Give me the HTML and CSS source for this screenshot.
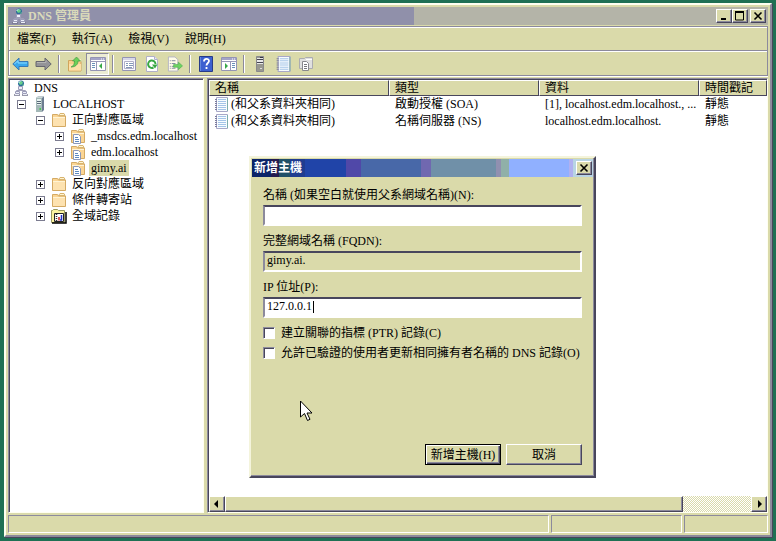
FILE: index.html
```html
<!DOCTYPE html>
<html lang="zh-Hant">
<head>
<meta charset="utf-8">
<title>DNS 管理員</title>
<link rel="stylesheet" href="styles.css">
</head>
<body>
<svg class="sprite" aria-hidden="true">
  <symbol id="i-dns" viewBox="0 0 16 16">
    <path d="M8 7v4M3.500 12v-1.500h9V12" fill="none" stroke="#a0a0b8"/>
    <circle cx="8" cy="3.500" r="3" fill="#2c6c9c"/><path d="M6 2l3-1 1 2-2 2-2-1zM9 5l2-1-1 2z" fill="#6ad08a"/><path d="M5.500 2.500l2-1" stroke="#d8f4f4"/>
    <path d="M5.500 6.500h4v3h-4zM2.500 11.500h4v2h-4zM9.500 11.500h4v2h-4z" fill="#eceef8" stroke="#9c9cb8"/>
    <path d="M1 15h6M9 15h6" stroke="#77778f" stroke-width="1.500"/><path d="M2 14.500h4M10 14.500h4" stroke="#eceef8"/>
  </symbol>
  <symbol id="i-server" viewBox="0 0 16 16">
    <path d="M4 2l2-1.500h6V14l-2 2H4z" fill="#6c7c90"/><path d="M4 2h6v14H4z" fill="#a4b8b8"/>
    <path d="M5 3h4v2H5zM5 6h4v1H5zM5 8h4v1H5z" fill="#e8f2f0"/><path d="M5 5.500h4M5 7.500h4" stroke="#586878"/><path d="M7.500 12h1.500v2H7.500z" fill="#48c850"/><path d="M4 2l2-1.500h6L10 2z" fill="#ccd8d8"/>
  </symbol>
  <symbol id="i-server-gray" viewBox="0 0 16 16">
    <path d="M4.500 .5h7v15h-7z" fill="#989890" stroke="#88888c"/><path d="M5 2h6v6H5z" fill="#e8e8e8"/><path d="M5 3.500h6M5 6.500h6" stroke="#444450"/><path d="M8 12h2v1H8z" fill="#ddd"/><path d="M8 1h3v1H8z" fill="#383840"/>
  </symbol>
  <symbol id="i-folder" viewBox="0 0 16 16">
    <path d="M1.500 14.500v-12h5l1 1.500h7v10.500z" fill="#fbd594" stroke="#d4aa64"/><path d="M7.500 3.500l1.500-2h4l1 2z" fill="#fff4d0" stroke="#d8b470"/><path d="M2 5.500h12V14H2z" fill="#fde2b0"/><path d="M2 5.500h12" stroke="#fff4d4"/>
  </symbol>
  <symbol id="i-zone" viewBox="0 0 16 16">
    <path d="M1.500 14.500v-12h5l1 1.500h7v10.500z" fill="#fbd594" stroke="#d4aa64"/><path d="M7.500 3.500l1.500-2h4l1 2z" fill="#fff4d0" stroke="#d8b470"/><path d="M2 5.500h12" stroke="#fff4d4"/>
    <path d="M3.500 6.500h5l2 2v7h-7z" fill="#fff" stroke="#8c98b8"/><path d="M5 9.500h3M5 11.500h4M5 13.500h4" stroke="#5c88c0"/>
  </symbol>
  <symbol id="i-log" viewBox="0 0 16 16">
    <path d="M.5 2.500h1l1-1h4l1 1h6v12H.5z" fill="#fbf3a0" stroke="#999960"/><path d="M1 15h14V4" fill="none" stroke="#000" stroke-width="1.500"/>
    <path d="M3.500 5.500h9v8h-9z" fill="#fff" stroke="#222"/><path d="M5.500 6v7" stroke="#333" stroke-width="1.500" stroke-dasharray="1 1"/><path d="M8 9v3.500" stroke="#d02020" stroke-width="1.500"/><path d="M10.500 7v5H9" fill="none" stroke="#2030c8" stroke-width="1.500"/>
  </symbol>
  <symbol id="i-record" viewBox="0 0 14 15">
    <path d="M2.500 .5h11v14h-11z" fill="#f8fcff" stroke="#a8a8c8"/><path d="M4 2.500h8M4 4.500h8M4 6.500h8M4 8.500h8M4 10.500h8M4 12.500h8" stroke="#a4c4e8"/>
    <path d="M13.500 1v13" stroke="#7cacac"/><path d="M1 2.500h2M1 4.500h2M1 6.500h2M1 8.500h2M1 10.500h2M1 12.500h2" stroke="#7c7c9c"/>
  </symbol>
  <symbol id="i-back" viewBox="0 0 17 14">
    <path d="M.8 7L7 1v3.500h9v5H7V13z" fill="#38a8ec" stroke="#3878b4"/><path d="M2.500 7L6 3.500V6h9" fill="none" stroke="#8cdcff"/>
  </symbol>
  <symbol id="i-fwd" viewBox="0 0 17 14">
    <path d="M16.200 7L10 1v3.500H1v5h9V13z" fill="#949498" stroke="#66666f"/><path d="M2 5.500h9V3.500" fill="none" stroke="#b4b4b4"/>
  </symbol>
  <symbol id="i-up" viewBox="0 0 16 16">
    <path d="M1.500 4.500h5l1 1h6.500v9.500H1.500z" fill="#fbd08c" stroke="#d0a45c"/><path d="M2 8h12v6.500H2z" fill="#fde0a8"/><path d="M9 3h5v2.500H9z" fill="#fff0c0"/><path d="M4 11c2.500-1 3.500-3 3.500-6H5.500L9.500 1l4 4H11c0 4-3 6-7 6z" fill="#6cd058" stroke="#389040" stroke-width=".6"/>
  </symbol>
  <symbol id="i-tree" viewBox="0 0 16 14">
    <path d="M.5 .5h15v13H.5z" fill="#fff" stroke="#9494b4"/><path d="M1 2h14" stroke="#a4a4c8" stroke-width="2"/><path d="M11 2h1M13 2h1" stroke="#fff"/><path d="M1 4.500h14M6.500 5v8" stroke="#9898b8"/><path d="M2 6.500h3M2 8.500h3M2 10.500h3" stroke="#6890b8"/><path d="M12 6v6L9 9z" fill="#38a848"/>
  </symbol>
  <symbol id="i-show" viewBox="0 0 16 14">
    <path d="M.5 .5h15v13H.5z" fill="#fff" stroke="#9494b4"/><path d="M1 2h14" stroke="#a4a4c8" stroke-width="2"/><path d="M11 2h1M13 2h1" stroke="#fff"/><path d="M1 4.500h14M9.500 5v8" stroke="#9898b8"/><path d="M11 6.500h3M11 8.500h3M11 10.500h3" stroke="#6890b8"/><path d="M4 6v6l3-3z" fill="#38a848"/>
  </symbol>
  <symbol id="i-props" viewBox="0 0 16 16">
    <path d="M1.500 1.500h13v13h-13z" fill="#f8f8ff" stroke="#9494b4"/><path d="M2 3h12" stroke="#b8b8d4"/><path d="M3.500 5.500h9v7h-9z" fill="#fff" stroke="#b0b0c8"/><path d="M5 7.500h2M8 7.500h4M5 9.500h2M8 9.500h4M5 11.500h6" stroke="#8498b8"/>
  </symbol>
  <symbol id="i-refresh" viewBox="0 0 16 16">
    <path d="M2.500 .5h8l3 3v12h-11z" fill="#fff" stroke="#b0b0c8"/><path d="M10.500 .5v3h3" fill="#e8e8ff" stroke="#b0b0c8"/><path d="M9.500 11.500A3.700 3.700 0 1 1 11.500 8" fill="none" stroke="#38a844" stroke-width="2"/><path d="M8 8.500h5.500L11 12.500z" fill="#38a844"/>
  </symbol>
  <symbol id="i-export" viewBox="0 0 17 16">
    <path d="M1.500 .5h7l3 3v12h-10z" fill="#fffce8" stroke="#b4b4c4"/><path d="M3 4.500h1M5 4.500h4M3 7.500h1M5 7.500h4M3 10.500h1M5 10.500h3M3 12.500h1M5 12.500h4" stroke="#7c889c"/><path d="M7 8.500h5V6l4.500 4-4.500 4v-2.500H7z" fill="#6cd460" stroke="#48a850" stroke-width=".6"/>
  </symbol>
  <symbol id="i-help" viewBox="0 0 14 16">
    <path d="M.5 .5h13v15H.5z" fill="#3c60d0" stroke="#283c88"/><path d="M1.500 1v14" stroke="#6488dc"/><path d="M5 5.500C5 2 10 2.200 10 5c0 2-2.500 2-2.500 4.500M7.500 11v2" fill="none" stroke="#fff" stroke-width="1.800"/>
  </symbol>
  <symbol id="i-docs" viewBox="0 0 16 16">
    <path d="M1.500 12.500v-10h5l1-1h7v11z" fill="#e0e0e0" stroke="#acacb0"/><path d="M8 3.500h6" stroke="#fff"/><path d="M4.500 5.500h4l2 2v7h-6z" fill="#fff" stroke="#88888c"/><path d="M6 8.500h3M6 10.500h3M6 12.500h3" stroke="#77777c"/>
  </symbol>
</svg>

<main class="window">
  <header class="titlebar">
    <svg class="icon"><use href="#i-dns"/></svg>
    <h1 class="title">DNS 管理員</h1>
    <div class="window-buttons">
      <button class="caption" aria-label="最小化"><svg viewBox="0 0 10 10"><path d="M2 8h5" stroke="#000" stroke-width="2"/></svg></button>
      <button class="caption" aria-label="最大化"><svg viewBox="0 0 10 10"><path d="M.5 1v8h8V1" fill="none" stroke="#000"/><path d="M0 1h9" stroke="#000" stroke-width="2"/></svg></button>
      <button class="caption caption-close" aria-label="關閉"><svg viewBox="0 0 10 10"><path d="M1.500 1.500l7 7M8.500 1.500l-7 7" stroke="#000" stroke-width="1.600"/></svg></button>
    </div>
  </header>

  <div class="bars">
    <nav class="menu">
      <button>檔案(F)</button><button>執行(A)</button><button>檢視(V)</button><button>說明(H)</button>
    </nav>
    <div class="toolbar">
      <button aria-label="上一頁"><svg class="wide"><use href="#i-back"/></svg></button>
      <button aria-label="下一頁"><svg class="wide"><use href="#i-fwd"/></svg></button>
      <span class="sep"></span>
      <button aria-label="上一層"><svg class="icon"><use href="#i-up"/></svg></button>
      <button class="pressed" aria-label="主控台樹狀目錄"><svg class="icon"><use href="#i-tree"/></svg></button>
      <span class="sep"></span>
      <button aria-label="內容"><svg class="icon"><use href="#i-props"/></svg></button>
      <button aria-label="重新整理"><svg class="icon"><use href="#i-refresh"/></svg></button>
      <button aria-label="匯出清單"><svg class="icon"><use href="#i-export"/></svg></button>
      <span class="sep"></span>
      <button aria-label="說明"><svg class="icon"><use href="#i-help"/></svg></button>
      <button aria-label="執行窗格"><svg class="icon"><use href="#i-show"/></svg></button>
      <span class="sep"></span>
      <button aria-label="伺服器"><svg class="icon"><use href="#i-server-gray"/></svg></button>
      <button aria-label="記錄"><svg class="icon"><use href="#i-record"/></svg></button>
      <button aria-label="區域"><svg class="icon"><use href="#i-docs"/></svg></button>
    </div>
  </div>

  <div class="panes">
    <section class="tree pane">
      <div class="node root"><svg class="icon"><use href="#i-dns"/></svg><span class="label">DNS</span></div>
      <ul>
        <li>
          <div class="node"><button class="toggle" aria-label="摺疊"></button><svg class="icon"><use href="#i-server"/></svg><span class="label">LOCALHOST</span></div>
          <ul>
            <li>
              <div class="node"><button class="toggle" aria-label="摺疊"></button><svg class="icon"><use href="#i-folder"/></svg><span class="label">正向對應區域</span></div>
              <ul>
                <li class="node"><button class="toggle plus" aria-label="展開"></button><svg class="icon"><use href="#i-zone"/></svg><span class="label">_msdcs.edm.localhost</span></li>
                <li class="node"><button class="toggle plus" aria-label="展開"></button><svg class="icon"><use href="#i-zone"/></svg><span class="label">edm.localhost</span></li>
                <li class="node leaf"><svg class="icon"><use href="#i-zone"/></svg><span class="label selected">gimy.ai</span></li>
              </ul>
            </li>
            <li class="node"><button class="toggle plus" aria-label="展開"></button><svg class="icon"><use href="#i-folder"/></svg><span class="label">反向對應區域</span></li>
            <li class="node"><button class="toggle plus" aria-label="展開"></button><svg class="icon"><use href="#i-folder"/></svg><span class="label">條件轉寄站</span></li>
            <li class="node"><button class="toggle plus" aria-label="展開"></button><svg class="icon"><use href="#i-log"/></svg><span class="label">全域記錄</span></li>
          </ul>
        </li>
      </ul>
    </section>

    <section class="list pane">
      <table class="records">
        <colgroup><col class="c-name"><col class="c-type"><col class="c-data"><col></colgroup>
        <thead><tr><th>名稱</th><th>類型</th><th>資料</th><th>時間戳記</th></tr></thead>
        <tbody>
          <tr><td><span class="entry"><svg class="icon-record"><use href="#i-record"/></svg>(和父系資料夾相同)</span></td><td>啟動授權 (SOA)</td><td>[1], localhost.edm.localhost., ...</td><td>靜態</td></tr>
          <tr><td><span class="entry"><svg class="icon-record"><use href="#i-record"/></svg>(和父系資料夾相同)</span></td><td>名稱伺服器 (NS)</td><td>localhost.edm.localhost.</td><td>靜態</td></tr>
        </tbody>
      </table>
      <div class="scrollbar">
        <button class="arrow" aria-label="向左捲動"><svg viewBox="0 0 8 8"><path d="M5 0v8L1 4z"/></svg></button>
        <div class="track"><div class="thumb"></div></div>
        <button class="arrow" aria-label="向右捲動"><svg viewBox="0 0 8 8"><path d="M3 0v8l4-4z"/></svg></button>
      </div>
    </section>
  </div>

  <footer class="status"><span></span><span></span><span></span></footer>
</main>

<form class="dialog" role="dialog" aria-labelledby="dialog-title">
  <header class="dialog-title">
    <h2 class="title" id="dialog-title">新增主機</h2>
    <button type="button" class="caption" aria-label="關閉"><svg viewBox="0 0 10 10"><path d="M1.500 1.500l7 7M8.500 1.500l-7 7" stroke="#000" stroke-width="1.600"/></svg></button>
  </header>
  <div class="dialog-body">
    <div class="field"><label for="name">名稱 (如果空白就使用父系網域名稱)(N):</label><input id="name" type="text"></div>
    <div class="field"><label for="fqdn">完整網域名稱 (FQDN):</label><input id="fqdn" type="text" value="gimy.ai." readonly></div>
    <div class="field active"><label for="ip">IP 位址(P):</label><input id="ip" type="text" value="127.0.0.1"><span class="caret"></span></div>
    <div class="checks">
      <label><input type="checkbox">建立關聯的指標 (PTR) 記錄(C)</label>
      <label><input type="checkbox">允許已驗證的使用者更新相同擁有者名稱的 DNS 記錄(O)</label>
    </div>
    <div class="actions">
      <button type="button" class="push default">新增主機(H)</button>
      <button type="button" class="push">取消</button>
    </div>
  </div>
</form>

<svg class="pointer" viewBox="0 0 13 22" aria-hidden="true"><path d="M.5 1v16l4-3.500 3 7 2.500-1.200-3-6.300h5z" fill="#fff" stroke="#000"/></svg>
</body>
</html>
```
FILE: styles.css
```css
:root {
  --face: #dadaaa;
  --light: #fffff0;
  --shadow: #8c8a9c;
  --dark: #48465c;
}

* { box-sizing: border-box; }

body {
  margin: 0;
  height: 100vh;
  padding: 3px 4px 4px;
  display: flex;
  overflow: hidden;
  background: #1f7054;
  color: #000;
  font: 12px/16px "Liberation Serif", "Noto Sans CJK TC", serif;
}

button, input {
  margin: 0;
  padding: 0;
  border: 0;
  border-radius: 0;
  background: none;
  color: inherit;
  font: inherit;
}

ul { margin: 0; padding: 0; list-style: none; }

.sprite { position: absolute; width: 0; height: 0; }
.icon { flex: none; width: 16px; height: 16px; }

.window {
  flex: 1;
  min-width: 0;
  display: flex;
  flex-direction: column;
  padding: 2px;
  background: var(--face);
  border: 2px solid;
  border-color: var(--light) var(--shadow) var(--shadow) var(--light);
  box-shadow: 1px 1px 0 var(--dark);
}

/* Title bars */
.titlebar {
  flex: none;
  height: 18px;
  padding: 0 2px 0 3px;
  display: flex;
  align-items: center;
  gap: 1px;
  background: linear-gradient(to right, #9090aa 53.4%, #b4b4a8 53.4%);
}

.title {
  flex: 1;
  margin: 0;
  font-size: 12px;
  line-height: 16px;
  font-weight: bold;
}

.titlebar .title { color: #dadaba; }
.window-buttons { display: flex; }

.caption {
  width: 16px;
  height: 14px;
  display: flex;
  align-items: center;
  justify-content: center;
  background: var(--face);
  border: 1px solid;
  border-color: #fff var(--dark) var(--dark) #fff;
  box-shadow: inset -1px -1px 0 var(--shadow);
}

.caption svg { width: 10px; height: 10px; }
.caption-close { margin-left: 2px; }

/* Menu and toolbar */
.bars {
  flex: none;
  margin-top: 1px;
  border: 1px solid var(--shadow);
  box-shadow: inset 1px 1px 0 #fff, 0 1px 0 #fff;
}

.menu {
  height: 24px;
  padding: 0 8px;
  display: flex;
  align-items: center;
  gap: 16px;
  border-bottom: 1px solid var(--shadow);
}

.toolbar {
  height: 24px;
  display: flex;
  align-items: center;
  border-top: 1px solid #fff;
}

.toolbar button {
  width: 23px;
  height: 22px;
  display: flex;
  align-items: center;
  justify-content: center;
}

.toolbar .wide { width: 17px; height: 14px; }

.toolbar .pressed {
  background: #ececd4;
  border: 1px solid;
  border-color: var(--shadow) #fff #fff var(--shadow);
}

.sep { width: 8px; height: 18px; display: flex; justify-content: center; }
.sep::before { content: ""; width: 2px; background: linear-gradient(to right, var(--shadow) 50%, #fff 50%); }

/* Panes */
.panes {
  flex: 1;
  min-height: 0;
  margin-top: 2px;
  display: flex;
  gap: 3px;
}

.pane {
  padding: 1px 0 0 1px;
  background: #fff;
  border: 1px solid;
  border-color: var(--shadow) var(--light) var(--light) var(--shadow);
  box-shadow: inset 1px 1px 0 var(--dark);
}

.tree { flex: 0 0 196px; overflow: hidden; }
.tree > ul { padding-left: 7px; }
.tree ul ul { padding-left: 19px; }

.node { height: 16px; display: flex; align-items: center; }
.root { padding-left: 3px; }
.leaf { padding-left: 15px; }

.toggle {
  flex: none;
  width: 9px;
  height: 9px;
  margin-right: 6px;
  border: 1px solid #7c7c90;
  background: linear-gradient(#000, #000) center / 5px 1px no-repeat #fff;
}

.toggle.plus {
  background:
    linear-gradient(#000, #000) center / 5px 1px no-repeat,
    linear-gradient(#000, #000) center / 1px 5px no-repeat #fff;
}

.label { margin-left: 3px; padding: 0 2px; white-space: nowrap; }
.selected { background: var(--face); }

.list {
  flex: 1;
  min-width: 0;
  display: flex;
  flex-direction: column;
  justify-content: space-between;
}

.records { width: 100%; table-layout: fixed; border-collapse: separate; border-spacing: 0; }
.c-name { width: 180px; }
.c-type { width: 150px; }
.c-data { width: 160px; }

th, td { padding: 0 0 0 6px; text-align: left; white-space: nowrap; overflow: hidden; }

th {
  height: 16px;
  line-height: 14px;
  font-weight: normal;
  background: var(--face);
  border: 1px solid;
  border-color: #fff var(--dark) var(--dark) #fff;
  padding-left: 5px;
}

td { height: 17px; line-height: 17px; }
.entry { display: flex; align-items: center; gap: 3px; }
.icon-record { flex: none; width: 14px; height: 15px; }
td:first-child { padding-left: 5px; }

.scrollbar { height: 16px; display: flex; }

.arrow, .thumb {
  background: var(--face);
  border: 1px solid;
  border-color: #fff var(--dark) var(--dark) #fff;
  box-shadow: inset -1px -1px 0 var(--shadow);
}

.arrow { width: 16px; display: flex; align-items: center; justify-content: center; }
.arrow svg { width: 8px; height: 8px; }

.track {
  flex: 1;
  display: flex;
  background: repeating-conic-gradient(#fff 0 25%, var(--face) 0 50%) 0 0 / 2px 2px;
}

.thumb { width: 87%; }

/* Status bar */
.status {
  flex: none;
  height: 18px;
  margin-top: 2px;
  display: grid;
  grid-template-columns: 1fr 131px 84px;
  gap: 2px;
}

.status span {
  border: 1px solid;
  border-color: var(--shadow) #fff #fff var(--shadow);
}

/* New host dialog */
.dialog {
  position: absolute;
  left: 249px;
  top: 156px;
  width: 347px;
  height: 322px;
  padding: 1px;
  display: flex;
  flex-direction: column;
  background: var(--face);
  border: 2px solid;
  border-color: #f4f4dc var(--dark) var(--dark) #f4f4dc;
  box-shadow: inset -1px -1px 0 var(--shadow);
}

.dialog-title {
  flex: none;
  height: 18px;
  padding: 0 1px 0 2px;
  display: flex;
  align-items: center;
  color: #fff;
  background: linear-gradient(to right,
    #0c2468 5.500%, #241c50 5.500% 8%, #205068 8% 11%, #203c90 11% 15.500%,
    #2044a8 15.500% 27.500%, #5048a8 27.500% 32%, #4868a8 32% 49.500%,
    #7068b0 49.500% 52.500%, #7090a8 52.500% 71.500%, #9090b0 71.500% 73%,
    #90b0a8 73% 75.500%, #90b0ff 75.500% 93%, #b0b0f0 93% 94%, #b8d4e4 94%);
}

.dialog-body {
  flex: 1;
  display: flex;
  flex-direction: column;
  padding: 10px 11px 10px 11px;
}

.field { position: relative; display: flex; flex-direction: column; gap: 2px; margin-bottom: 7px; }

.field input {
  width: 100%;
  height: 21px;
  padding: 0 2px 3px;
  background: #fff;
  border: 2px solid;
  border-color: var(--dark) #fff #fff var(--shadow);
  outline: 0;
}

.field input[readonly] { background: var(--face); }

.caret { position: absolute; left: 50px; bottom: 5px; width: 1px; height: 12px; background: #000; }

.checks { display: flex; flex-direction: column; gap: 4px; }
.checks label { display: flex; align-items: center; gap: 6px; white-space: nowrap; }

.checks input {
  appearance: none;
  width: 12px;
  height: 12px;
  background: #fff;
  border: 1px solid;
  border-color: var(--shadow) #fff #fff var(--shadow);
  box-shadow: inset 1px 1px 0 var(--dark);
}

.actions { margin-top: auto; display: flex; justify-content: flex-end; gap: 5px; }

.push {
  width: 76px;
  height: 21px;
  background: var(--face);
  border: 1px solid;
  border-color: #fff var(--dark) var(--dark) #fff;
  box-shadow: inset -1px -1px 0 var(--shadow);
}

.push.default {
  border-color: #000;
  box-shadow: inset 1px 1px 0 #fff, inset -1px -1px 0 var(--dark), inset -2px -2px 0 var(--shadow);
}

.pointer { position: absolute; left: 300px; top: 400px; width: 13px; height: 22px; }
```
